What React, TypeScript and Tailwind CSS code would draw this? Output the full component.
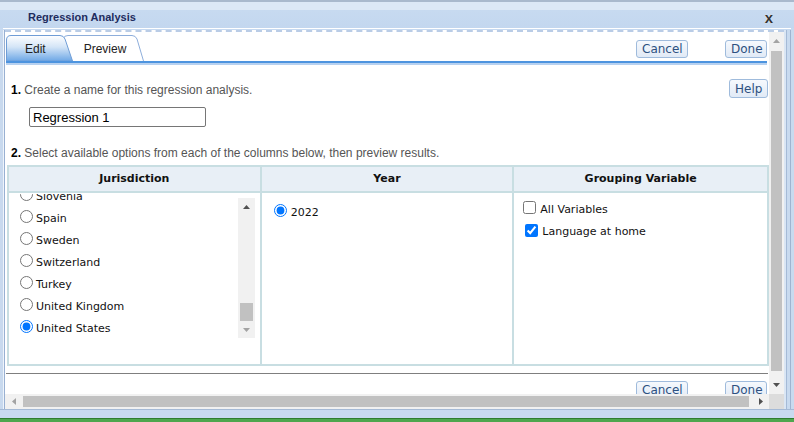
import React from 'react';

const btn =
  "h-[18px] px-[5px] rounded-[3px] border border-[#9fbbdc] bg-gradient-to-b from-[#f6f9fd] to-[#e1eaf6] text-[#2d5080] text-[12px] leading-[16px] font-['DejaVu_Sans',sans-serif]";

const Arrow = ({ dir, color }: { dir: 'up' | 'down' | 'left' | 'right'; color: string }) => {
  const pts = {
    up: '0,4 3.5,0 7,4',
    down: '0,0 3.5,4 7,0',
    left: '4,0 0,3.5 4,7',
    right: '0,0 4,3.5 0,7',
  }[dir];
  const vertical = dir === 'up' || dir === 'down';
  return (
    <svg width={vertical ? 7 : 4} height={vertical ? 4 : 7} viewBox={vertical ? '0 0 7 4' : '0 0 4 7'}>
      <polygon points={pts} fill={color} />
    </svg>
  );
};

const jurisdictions = ['Slovenia', 'Spain', 'Sweden', 'Switzerland', 'Turkey', 'United Kingdom', 'United States'];

const ButtonRow = () => (
  <div className="flex justify-end mr-[2px]">
    <button className={btn + ' w-[52px]'}>Cancel</button>
    <button className={btn + ' w-[42px] ml-[37px]'}>Done</button>
  </div>
);

export default function App() {
  return (
    <div className="w-[794px] h-[422px] flex flex-col overflow-hidden bg-[#c6d9f0] font-['Liberation_Sans',Arial,sans-serif]">
      {/* title bar */}
      <div className="h-[28px] flex items-center justify-between border-t-2 border-[#a9b9cd] bg-[linear-gradient(to_bottom,#dce8f6_0,#dce8f6_8px,#c7daf0_8px,#c3d7ef_100%)] pt-[4px] pl-[28px] pr-[21px]">
        <span className="text-[11px] font-bold text-[#1e2c5e]">Regression Analysis</span>
        <span className="text-[15px] font-bold leading-none text-[#333] [text-shadow:0_0_1px_#fff]">x</span>
      </div>
      <div className="h-[1px] bg-white mx-[3px]" />
      <div className="h-[1px] bg-[#c6d9f0]" />

      <div className="flex h-[379px]">
        {/* left frame */}
        <div className="w-[5px] flex">
          <div className="w-[3px] bg-[#c8d9ee]" />
          <div className="w-[1px] bg-[#eef4fb]" />
          <div className="w-[1px] bg-[#98b0d2]" />
        </div>

        <div className="w-[779px] flex flex-col bg-white border-t-2 border-dashed border-[#b9cce6]">
          <div className="flex h-[362px]">
            {/* viewport */}
            <div className="w-[764px] overflow-hidden flex flex-col">
              <div className="h-[29px] flex items-start justify-between shrink-0">
                <div className="relative flex h-[26px] w-[144px] items-center ml-[1px] mt-[3px] pt-[1px] text-[12px] text-[#222]">
                  <svg className="absolute inset-0" width="144" height="26" viewBox="0 0 144 26">
                    <defs>
                      <linearGradient id="editg" x1="0" y1="0" x2="0" y2="1">
                        <stop offset="0" stopColor="#ffffff" />
                        <stop offset="0.45" stopColor="#d4e5f7" />
                        <stop offset="1" stopColor="#6ea8e6" />
                      </linearGradient>
                    </defs>
                    <path d="M55,26 L57.5,3.5 Q58,0.5 62,0.5 L126,0.5 Q129.5,0.5 131,4 L137.5,26" fill="#fff" stroke="#8eaedb" />
                    <path d="M0.5,26 L0.5,5 Q0.5,0.5 5,0.5 L54,0.5 Q57.5,0.5 59,4 L66.5,26 Z" fill="url(#editg)" stroke="#6f9dd6" />
                  </svg>
                  <span className="relative ml-[19px]">Edit</span>
                  <span className="relative ml-[38px]">Preview</span>
                </div>
                <div className="mt-[8px]">
                  <ButtonRow />
                </div>
              </div>
              <div className="h-[2px] bg-[#4d94df] ml-[1px] mr-[2px] shrink-0" />
              <div className="h-[2px] bg-[#b7d1f0] ml-[1px] mr-[2px] shrink-0" />

              <div className="mt-[14px] flex justify-between items-start pl-[6px] pr-[1px] shrink-0">
                <div className="pt-[4px] text-[12px] leading-[14px] text-[#555]">
                  <span className="font-bold text-black">1.</span> Create a name for this regression analysis.
                </div>
                <button className={btn + ' w-[39px] h-[19px]'}>Help</button>
              </div>

              <input
                className="mt-[9px] ml-[24px] w-[177px] h-[20px] shrink-0 border border-[#767676] rounded-[2px] px-[3px] text-[13px] text-black outline-none"
                defaultValue="Regression 1"
                readOnly
              />

              <div className="mt-[19px] pl-[6px] text-[12px] leading-[14px] text-[#555] shrink-0">
                <span className="font-bold text-black">2.</span> Select available options from each of the columns below, then preview results.
              </div>

              {/* table */}
              <div className="mt-[5px] ml-[2px] w-[762px] shrink-0 border-2 border-[#c8dee2] font-['DejaVu_Sans',Verdana,sans-serif] text-[11px] text-[#111]">
                <div className="grid grid-cols-3 h-[26px] border-b-2 border-[#c8dee2] bg-[#e8eff6] font-bold">
                  <div className="flex items-center justify-center border-r-2 border-[#c8dee2]">Jurisdiction</div>
                  <div className="flex items-center justify-center border-r-2 border-[#c8dee2]">Year</div>
                  <div className="flex items-center justify-center">Grouping Variable</div>
                </div>
                <div className="grid grid-cols-3 h-[171px]">
                  <div className="border-r-2 border-[#c8dee2] pt-[1px]">
                    <div className="flex h-[148px] overflow-hidden">
                      <div className="flex-1 pl-[11px] -mt-[8px]">
                        {jurisdictions.map((j) => (
                          <label key={j} className="flex items-center h-[22px]">
                            <input type="radio" name="jur" className="mb-[5px]" defaultChecked={j === 'United States'} />
                            <span className="ml-[3px]">{j}</span>
                          </label>
                        ))}
                      </div>
                      <div className="w-[17px] h-[140px] mt-[4px] mr-[5px] flex flex-col bg-[#f1f1f1]">
                        <div className="h-[17px] flex items-center justify-center">
                          <Arrow dir="up" color="#505050" />
                        </div>
                        <div className="mt-[88px] h-[18px] mx-[2px] bg-[#c1c1c1]" />
                        <div className="h-[17px] flex items-center justify-center">
                          <Arrow dir="down" color="#a3a3a3" />
                        </div>
                      </div>
                    </div>
                  </div>
                  <div className="border-r-2 border-[#c8dee2] pt-[9px] pl-[12px]">
                    <label className="flex items-center h-[22px]">
                      <input type="radio" name="year" className="mb-[5px]" defaultChecked />
                      <span className="ml-[4px]">2022</span>
                    </label>
                  </div>
                  <div className="pt-[6px] pl-[9px]">
                    <label className="flex items-center h-[22px]">
                      <input type="checkbox" className="mb-[5px]" />
                      <span className="ml-[4px]">All Variables</span>
                    </label>
                    <label className="flex items-center h-[22px] pl-[2px]">
                      <input type="checkbox" className="mb-[3px]" defaultChecked />
                      <span className="ml-[4px]">Language at home</span>
                    </label>
                  </div>
                </div>
              </div>

              <div className="mt-[7px] h-[1px] bg-[#7f7f7f] mx-[1px] shrink-0" />
              <div className="mt-[7px] shrink-0">
                <ButtonRow />
              </div>
            </div>

            {/* vertical scrollbar */}
            <div className="w-[15px] flex flex-col bg-[#f1f1f1]">
              <div className="h-[17px] flex items-center justify-center">
                <Arrow dir="up" color="#a3a3a3" />
              </div>
              <div className="mt-[2px] h-[320px] mx-[2px] bg-[#c1c1c1]" />
              <div className="flex-1 flex items-center justify-center pt-[4px]">
                <Arrow dir="down" color="#505050" />
              </div>
            </div>
          </div>

          {/* horizontal scrollbar */}
          <div className="h-[15px] flex">
            <div className="w-[764px] flex bg-[#f1f1f1]">
              <div className="w-[17px] flex items-center justify-center">
                <Arrow dir="left" color="#a3a3a3" />
              </div>
              <div className="ml-[1px] my-[2px] w-[726px] bg-[#c1c1c1]" />
              <div className="flex-1" />
              <div className="w-[17px] flex items-center justify-center">
                <Arrow dir="right" color="#505050" />
              </div>
            </div>
            <div className="w-[15px] bg-[#dcdcdc]" />
          </div>
        </div>

        {/* right frame */}
        <div className="w-[10px] flex">
          <div className="w-[2px] bg-[#dae6f4]" />
          <div className="w-[1px] bg-[#a5bad6]" />
          <div className="w-[3px] bg-[#c8daef]" />
          <div className="w-[1px] bg-[#9fb4d1]" />
          <div className="w-[3px] bg-[#c8daef]" />
        </div>
      </div>

      <div className="h-[9px] border-t border-[#a5bad6] bg-[#c8daef]" />
      <div className="h-[4px] bg-[#4ea64e] border-t border-[#2f7d2f]" />
    </div>
  );
}
